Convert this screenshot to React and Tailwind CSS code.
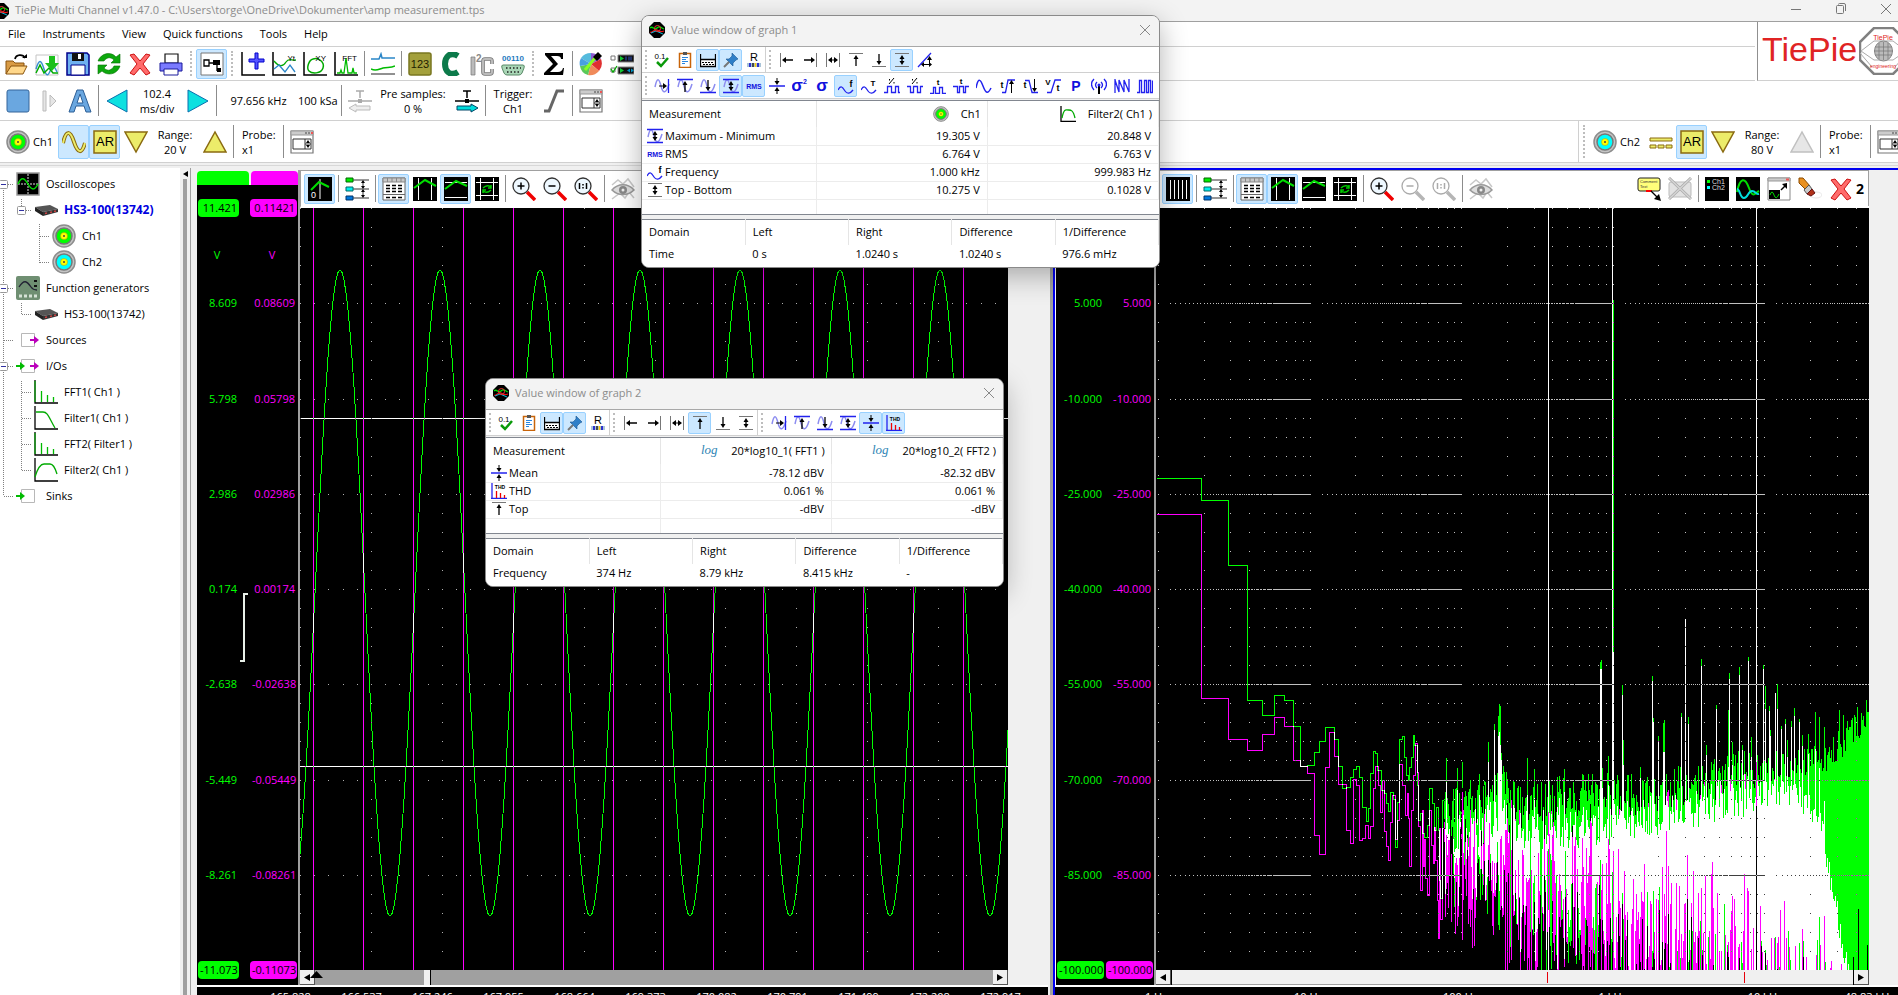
import React from 'react'
import clsx from 'clsx'

/* ---------- signal data ---------- */

function random(seed) {
  let s = seed
  return () => {
    s = (s * 1664525 + 1013904223) % 4294967296
    return s / 4294967296
  }
}

function envelope(points, x) {
  for (let i = 1; i < points.length; i++) {
    const [x0, y0] = points[i - 1]
    const [x1, y1] = points[i]
    if (x <= x1) return y0 + ((y1 - y0) * (x - x0)) / (x1 - x0)
  }
  return points[points.length - 1][1]
}

function dot(x, y) {
  return `M${Math.round(x)} ${Math.round(y)}h1v1h-1z`
}

const MAJOR = 95.25

function timeGrid() {
  let d = ''
  for (let c = 0; c < 10; c++) {
    for (let r = 0; r <= 40; r++) d += dot(c * 70.9, r * (MAJOR / 5))
  }
  for (let r = 1; r < 8; r++) {
    for (let x = 0; x < 708; x += 14.18) d += dot(x, r * MAJOR)
  }
  return d
}

function logGrid() {
  let d = ''
  for (let dec = 0; dec < 5; dec++) {
    for (let n = 1; n < 10; n++) {
      const x = 2 + 151.6 * (dec + Math.log10(n))
      if (x > 712) break
      for (let r = 0; r <= 40; r++) d += dot(x, r * (MAJOR / 5))
    }
    for (let r = 1; r < 8; r++) {
      const seen = new Set()
      for (let n = 12; n <= 100; n++) {
        const x = Math.round(2 + 151.6 * (dec + Math.log10(n / 10)))
        if (x > 712 || seen.has(x) || (n % 10 === 0 && n < 100)) continue
        seen.add(x)
        d += dot(x, r * MAJOR)
      }
    }
  }
  return d
}

function sinePath() {
  const pts = []
  for (let x = 0; x <= 708; x += 2) {
    pts.push(`${x} ${(385 - 323 * Math.cos((2 * Math.PI * (x - 40)) / 100)).toFixed(1)}`)
  }
  return 'M' + pts.join('L')
}

const squareEdges = Array.from({ length: 14 }, (_, k) => 13 + 50 * k)

// [right edge, level] for every FFT bin that is wide enough to show as a step
const stepsA = [
  [45, 270], [72, 292], [91, 357], [106, 492], [118, 507], [128, 487], [137, 492], [144, 518], [151, 558], [158, 557],
  [163, 544], [169, 533], [178, 519], [182, 531], [186, 558], [190, 580], [194, 579], [197, 569], [200, 561], [203, 558], [206, 569],
  [210, 599], [212, 613], [214, 600], [217, 565], [219, 543], [221, 545], [225, 562], [228, 582], [230, 585], [232, 595], [234, 603],
  [237, 584], [239, 591], [241, 639], [243, 594], [246, 531], [248, 528], [250, 549], [252, 567], [253, 572], [255, 559], [257, 549],
  [258, 527], [261, 537], [262, 577], [264, 612], [266, 605], [268, 625], [271, 629], [273, 617], [276, 580], [278, 595],
  [280, 622], [282, 599], [283, 622], [284, 672], [286, 690], [288, 592],
]
const stepsB = [
  [45, 306], [72, 490], [91, 531], [106, 542], [118, 526], [128, 509], [137, 518], [144, 552], [151, 558], [158, 565], [163, 627],
  [169, 646], [173, 559], [178, 524], [182, 548], [190, 576], [194, 622], [197, 635], [200, 571], [203, 577], [206, 632], [209, 630],
  [212, 617], [214, 630], [217, 618], [219, 580], [222, 558], [224, 577], [226, 604], [228, 572], [230, 623], [232, 638], [234, 652],
  [236, 614], [239, 587], [241, 631], [243, 612], [246, 556], [249, 577], [251, 607], [252, 585], [253, 610], [255, 658], [257, 602],
  [259, 567], [261, 535], [262, 564], [264, 618], [266, 682], [267, 602], [268, 658], [269, 631], [271, 670], [273, 687],
  [275, 602], [277, 637], [278, 655], [279, 619], [281, 652], [282, 692], [283, 730], [284, 620], [286, 711], [288, 620],
]

function stepPath(steps) {
  return 'M0.5 ' + (steps[0][1] + 0.5) + steps.map(([x, y]) => `V${y + 0.5}H${x + 0.5}`).join('')
}

const topA = [[284, 608], [300, 605], [330, 596], [345, 585], [365, 605], [400, 594], [450, 590], [490, 590], [540, 580], [580, 570], [620, 560], [650, 557], [670, 552], [685, 538], [700, 522], [713, 508]]
const botA = [[284, 640], [340, 655], [360, 660], [400, 690], [440, 690], [500, 705], [560, 745], [620, 790], [713, 820]]
const topB = [[284, 630], [330, 625], [345, 600], [365, 630], [400, 625], [450, 625], [490, 612], [540, 602], [590, 592], [630, 587], [655, 600], [666, 625], [672, 660], [680, 705], [688, 745], [694, 780], [713, 800]]
const botB = [[284, 670], [330, 680], [350, 710], [420, 725], [480, 775], [540, 800], [713, 830]]

// [column, FFT1 peak, FFT2 peak]
const peaks = [
  [290, 550, 574], [301, 560, 582], [306, 554, 584], [314, 572, 602], [323, 566, 587], [332, 534, 554], [338, 516, 522],
  [342, 508, 528], [343, 496, 524], [344, 498, 537], [345, 545, 552], [347, 558, 600], [358, 574, 600], [371, 550, 587],
  [378, 561, 590], [403, 568, 590], [408, 561, 584], [444, 454, 461], [445, 452, 461], [446, 560, 580], [452, 548, 577],
  [456, 0, 0], [457, 92, 444], [466, 477, 487], [467, 532, 557], [484, 559, 570], [496, 468, 473], [497, 510, 514], [502, 528, 534],
  [507, 515, 544], [508, 512, 544], [525, 505, 509], [529, 411, 411], [532, 509, 516], [545, 451, 458], [550, 537, 547],
  [560, 497, 501], [572, 502, 559], [573, 465, 471], [576, 534, 557], [583, 459, 467], [586, 537, 542], [592, 449, 453],
  [595, 529, 549], [607, 457, 461], [609, 478, 501], [613, 498, 503], [614, 522, 528], [619, 485, 485], [621, 476, 501],
  [625, 518, 521], [629, 511, 516], [631, 532, 549], [635, 513, 519], [638, 500, 508], [643, 511, 514], [646, 527, 538],
  [652, 526, 546], [659, 504, 541], [663, 509, 560], [668, 519, 593], [683, 502, 730], [687, 507, 750], [691, 513, 790],
  [701, 499, 800], [705, 505, 800], [710, 492, 800],
]

function spectrum(top, bottom, peakIndex, seed, start) {
  const rnd = random(seed)
  const peakAt = new Map(peaks.map((p) => [p[0], p[peakIndex]]))
  let d = ''
  for (let x = start; x < 713; x++) {
    const spread = x < 600 ? 44 : 30
    const tail = x < 350 ? 80 : 120
    let t = envelope(top, x) + (rnd() - 0.6) * spread
    const b = Math.min(762, envelope(bottom, x) + (rnd() + rnd() - 1) * tail)
    if (peakAt.has(x)) t = peakAt.get(x)
    if (t >= 762 || b <= t) continue
    d += `M${x} ${Math.round(t)}h1V${Math.round(b)}h-1z`
  }
  return d
}

/* ---------- shared bits ---------- */

function Svg({ size = 24, box = 24, children }) {
  return (
    <svg width={size} height={size} viewBox={`0 0 ${box} ${box}`} fill="none" className="shrink-0" aria-hidden="true">
      {children}
    </svg>
  )
}

function Tool({ label, active, tall, children }) {
  return (
    <button
      type="button"
      aria-label={label}
      className={clsx(
        'flex w-[31px] shrink-0 items-center justify-center rounded-xs border',
        tall ? 'h-[34px]' : 'h-[30px]',
        active ? 'border-[#99d1ff] bg-[#cce8ff]' : 'border-transparent',
      )}
    >
      {children}
    </button>
  )
}

function Sep() {
  return (
    <div className="flex w-[6px] shrink-0 justify-center self-stretch py-1">
      <div className="w-px bg-[#8c8c8c]" />
    </div>
  )
}

function Grip() {
  return (
    <div className="flex w-[10px] shrink-0 justify-center self-stretch py-1">
      <div className="border-l-2 border-dotted border-[#bdbdbd]" />
    </div>
  )
}

function Stack({ className, children }) {
  return <div className={clsx('shrink-0 text-center leading-[15px] whitespace-nowrap', className)}>{children}</div>
}

/* ---------- icons, 24px ---------- */

function AppIcon({ size = 16 }) {
  return (
    <Svg size={size} box={16}>
      <path d="M5 0h6l5 5v6l-5 5H5l-5-5V5z" fill="#000" />
      <path d="M1 6c3-3 4 3 7 0s4 0 7 1" stroke="#0d0" strokeWidth="1.3" />
      <path d="M1 10c3 2 4-4 7-2s4 2 7 1" stroke="#e11" strokeWidth="1.3" />
      <path d="M2 11l5-2 7 3" stroke="#0bd" />
      <circle cx="8.500" cy="6.500" r="3" stroke="#e33" />
    </Svg>
  )
}

function Bnc({ color, size = 24 }) {
  return (
    <Svg size={size}>
      <circle cx="12" cy="12" r="11" fill="#c4c4c4" stroke="#8d8d8d" strokeWidth="1.5" />
      <circle cx="12" cy="12" r="8" fill={color} stroke="#777" strokeWidth="1.5" />
      <circle cx="12" cy="12" r="3.500" fill="#ff0" stroke="#a99a00" strokeWidth=".5" />
      <circle cx="12" cy="12" r="1" fill="#444" />
    </Svg>
  )
}

const OpenIcon = () => (
  <Svg>
    <path d="M2 22V9h7l2 2h9v3" fill="#d99b45" stroke="#8a5510" />
    <path d="M2 22l5-8h16l-4 8z" fill="#ffd78a" stroke="#8a5510" />
    <path d="M11 7c1-5 8-5 10-1" stroke="#000" strokeWidth="1.800" />
    <path d="M18 6h5V2z" fill="#000" />
  </Svg>
)
const ImportIcon = () => (
  <Svg>
    <path d="M1 3h22v20H1z" stroke="#c4c4c4" />
    <path d="M1 17c3-10 5-10 8 0s5 5 7 0 4-2 6 3" stroke="#3a8fd0" strokeWidth="1.500" />
    <path d="M1 21l4-8 4 8 5-5 4 5h5" stroke="#0a0" strokeWidth="1.500" />
    <path d="M14 4h6v7h4l-7 8-7-8h4z" fill="#1cc01c" />
  </Svg>
)
const SaveIcon = () => (
  <Svg>
    <path d="M1 1h20l2 2v20H1z" fill="#6fb1f0" stroke="#00008b" strokeWidth="1.500" />
    <path d="M6 1h12v8H6z" fill="#111" />
    <path d="M12 2h3v5h-3z" fill="#fff" />
    <path d="M5 13h14v10H5z" fill="#fff" stroke="#00008b" />
  </Svg>
)
const RefreshIcon = () => (
  <Svg>
    <path d="M1 9C4 1 14-1 19 5l4-3v9h-9l3-3c-4-4-8-2-10 1z" fill="#0da80d" stroke="#067006" strokeWidth=".6" />
    <path d="M23 14c-3 9-13 10-18 5l-4 3v-9h9l-3 3c4 4 8 2 10-2z" fill="#0da80d" stroke="#067006" strokeWidth=".6" />
  </Svg>
)
const CrossIcon = () => (
  <Svg>
    <path d="M2 3l4-1 6 7 6-7 4 1-7 9 7 9-4 2-6-7-6 7-4-2 7-9z" fill="#ff6b6b" stroke="#c11" />
  </Svg>
)
const PrintIcon = () => (
  <Svg>
    <path d="M6 2h13v9H6z" fill="#fff" stroke="#111" strokeWidth="1.200" />
    <path d="M1 11h22v8H1z" fill="#7a7aff" stroke="#1a1a9c" />
    <path d="M5 17h14v6H5z" fill="#fff" stroke="#1a1a9c" />
  </Svg>
)
const ObjectTreeIcon = () => (
  <Svg>
    <path d="M1 1h22v22H1z" fill="#fff" stroke="#777" />
    <path d="M4 8h5v6H4z" stroke="#000" strokeWidth="1.300" />
    <path d="M9 11h4M17 13v6" stroke="#000" strokeWidth="1.300" />
    <path d="M13 8h7v5h-7zM17 16h4v4h-4z" fill="#000" />
  </Svg>
)
const Axes = ({ children, label }) => (
  <Svg>
    <path d="M1 0v23h23" stroke="#000" strokeWidth="1.500" />
    {children}
    {label && (
      <text x="23" y="9" textAnchor="end" fontSize="8" fill="#000" fontFamily="Liberation Sans">{label}</text>
    )}
  </Svg>
)
const AddGraphIcon = () => (
  <Axes>
    <path d="M14 1h3v6h6v3h-6v7h-3v-7H8V7h6z" fill="#55f" stroke="#00c" />
  </Axes>
)
const YtIcon = () => (
  <Axes label="Yt">
    <path d="M2 9c5 6 9 6 12 1s6-1 10-2" stroke="#0a0" strokeWidth="1.300" />
    <path d="M2 17l5-4 6 7 5-7 5 7" stroke="#2a86c8" strokeWidth="1.300" />
  </Axes>
)
const XyIcon = () => (
  <Axes label="XY">
    <path d="M10 7c5-2 12 3 10 9s-11 6-14 3 0-11 4-12z" stroke="#0a0" strokeWidth="1.500" />
  </Axes>
)
const FftIcon = () => (
  <Axes label="FFT">
    <path d="M3 21h3l1-3 1 3h2l2-15 2 15h4l1-5 1 5h3" stroke="#0b0" strokeWidth="1.300" />
  </Axes>
)
const MeterIcon = () => (
  <Svg>
    <path d="M0 7h8l2-5 1 4h13" stroke="#2a86c8" strokeWidth="1.500" />
    <path d="M0 17c5 3 8 0 12-1s8 0 12-2" stroke="#0b0" strokeWidth="1.500" />
    <path d="M0 22h24" stroke="#222" />
  </Svg>
)
const DigitsIcon = () => (
  <Svg>
    <rect x="1" y="1" width="22" height="22" rx="2" fill="#a3a03c" stroke="#7a7720" strokeWidth="1.500" />
    <text x="12" y="16" textAnchor="middle" fontSize="11" fill="#1d1d00" fontFamily="Liberation Sans">123</text>
  </Svg>
)
const CIcon = () => (
  <Svg>
    <path d="M19 4C11-1 6 5 6 12s5 13 13 8" stroke="#0c7a4a" strokeWidth="6" />
  </Svg>
)
const I2cIcon = () => (
  <Svg>
    <path d="M1 5h4v18H1z" fill="#bbb" stroke="#777" strokeWidth=".7" />
    <text x="6" y="10" fontSize="10" fontWeight="bold" fill="#888" fontFamily="Liberation Sans">2</text>
    <path d="M22 12V9q0-2-2-2h-5q-2 0-2 2v11q0 2 2 2h5q2 0 2-2v-3" stroke="#777" strokeWidth="3.600" />
    <path d="M22 12V9q0-2-2-2h-5q-2 0-2 2v11q0 2 2 2h5q2 0 2-2v-3" stroke="#bbb" strokeWidth="2" />
  </Svg>
)
const SerialIcon = () => (
  <Svg>
    <text x="12" y="9" textAnchor="middle" fontSize="8" fontWeight="bold" fill="#1d7ac0" fontFamily="Liberation Sans">00110</text>
    <path d="M2 13h20q2 0 1 3l-2 5q-1 2-3 2H6q-2 0-3-2l-2-5q-1-3 1-3z" fill="#a9d6b6" stroke="#5a8a68" />
    <path d="M5 16h15M6 20h12" stroke="#222" strokeWidth="1.500" strokeDasharray="1.500 2" />
  </Svg>
)
const SigmaIcon = () => (
  <Svg>
    <path d="M3 1h18v6h-2q0-3-4-3H9l7 8-8 8h8q4 0 5-4h1l-1 7H2v-2l9-9-8-9z" fill="#000" />
  </Svg>
)
const ColorsIcon = () => (
  <Svg>
    <path d="M12 12L2 6a12 12 0 0 1 10-5z" fill="#5bd" />
    <path d="M12 12V1a12 12 0 0 1 10 6z" fill="#8d5ad0" />
    <path d="M12 12l10-5a12 12 0 0 1-2 12z" fill="#e03030" />
    <path d="M12 12l8 7a12 12 0 0 1-11 4z" fill="#f08a5a" />
    <path d="M12 12L9 23a11 11 0 0 1-8-9z" fill="#5ac85a" />
    <path d="M12 12L1 14a11 11 0 0 1 1-8z" fill="#48a0e0" />
    <path d="M6 18L16 6" stroke="#8f2" strokeWidth="3" />
    <path d="M14 5l5-5 4 4-5 5z" fill="#000" />
  </Svg>
)
const OptionsIcon = () => (
  <Svg>
    <path d="M1 4h4v4H1zM1 16h4v4H1z" stroke="#777" />
    <path d="M1 17l2 3 4-6" stroke="#0a0" strokeWidth="1.300" />
    <path d="M8 3h16v7H8zM8 15h16v7H8z" fill="#111" stroke="#888" />
    <path d="M10 4l4 2.500-4 2.500zM10 16l4 2.500-4 2.500z" fill="#1c3" />
    <path d="M16 4.500v4M19 4.500v4M21 4.500v4" stroke="#35c" />
    <path d="M20 16.500l-3 2 3 2zM21 16.500l3 2-3 2z" fill="#09c" />
  </Svg>
)
const StopIcon = () => (
  <Svg>
    <rect x="1" y="1" width="22" height="22" rx="2" fill="#6aa7e0" stroke="#34659a" />
  </Svg>
)
const OneShotIcon = () => (
  <Svg>
    <path d="M6 2h3v20H6z" fill="#e6e6e6" stroke="#bbb" />
    <path d="M13 6l6 6-6 6z" fill="#e6e6e6" stroke="#bbb" />
  </Svg>
)
const AutoIcon = () => (
  <Svg>
    <path d="M9 1h6l8 22h-5l-2-6H8l-2 6H1zM12 5l-3 9h6z" fill="#6aa7e0" fillRule="evenodd" stroke="#2d5f96" />
  </Svg>
)
const TriIcon = ({ dir, fill, stroke }) => (
  <Svg>
    {dir === 'left' && <path d="M22 1v22L2 12z" fill={fill} stroke={stroke} />}
    {dir === 'right' && <path d="M2 1v22l20-11z" fill={fill} stroke={stroke} />}
    {dir === 'down' && <path d="M1 2h22L12 22z" fill={fill} stroke={stroke} strokeWidth="1.500" />}
    {dir === 'up' && <path d="M1 22h22L12 2z" fill={fill} stroke={stroke} strokeWidth="1.500" />}
  </Svg>
)
const PreTriggerIcon = ({ right }) => (
  <Svg>
    <path d="M8 2h8M12 2v7M0 12h24" stroke={right ? '#000' : '#aaa'} strokeWidth="1.500" />
    <path d="M10 10h4v4h-4z" fill={right ? '#000' : '#aaa'} />
    {right ? (
      <path d="M2 17h14v-2l7 4-7 4v-2H2z" fill="#0dd" stroke="#046" />
    ) : (
      <path d="M22 17H8v-2l-7 4 7 4v-2h14z" fill="#eee" stroke="#bbb" />
    )}
  </Svg>
)
const SlopeIcon = () => (
  <Svg>
    <path d="M2 22h5L15 2h7" stroke="#666" strokeWidth="3" />
  </Svg>
)
const SettingsIcon = () => (
  <Svg>
    <path d="M1 1h22v22H1z" fill="#fff" stroke="#777" strokeWidth="1.200" />
    <path d="M1 1h22v4H1z" fill="#ccc" stroke="#999" />
    <path d="M15 3h2M18 3h2" stroke="#888" strokeWidth="2" />
    <path d="M21 3h2" stroke="#e55" strokeWidth="2" />
    <path d="M3 9h18v10H3zM15 9v10M15 14h6" stroke="#333" />
    <path d="M16 13l2-3 2 3zM16 15l2 3 2-3z" fill="#000" />
  </Svg>
)
const SineIcon = () => (
  <Svg>
    <path d="M1 13C4 0 8 0 12 12s8 12 11 1" stroke="#8a6a10" strokeWidth="4" />
    <path d="M1 13C4 0 8 0 12 12s8 12 11 1" stroke="#ecec6a" strokeWidth="2" />
  </Svg>
)
const DcIcon = () => (
  <Svg>
    <path d="M1 8h22v3H1zM1 15h6v3H1zM9 15h6v3H9zM17 15h6v3h-6z" fill="#ecec6a" stroke="#8a6a10" />
  </Svg>
)
const ArIcon = () => (
  <Svg>
    <rect x="1" y="1" width="22" height="22" fill="#ecec6a" stroke="#8a6a10" strokeWidth="1.500" />
    <text x="12" y="16" textAnchor="middle" fontSize="13" fill="#000" fontFamily="Liberation Sans">AR</text>
  </Svg>
)
const Screen = ({ children }) => (
  <Svg>
    <path d="M0 0h24v24H0z" fill="#000" />
    {children}
  </Svg>
)
const ZeroCursorIcon = () => (
  <Screen>
    <path d="M12 2v20" stroke="#fff" />
    <path d="M3 13l8-8 10 5" stroke="#0d0" strokeWidth="2" />
    <text x="3" y="21" fontSize="9" fill="#fff" fontFamily="Liberation Sans">0</text>
  </Screen>
)
const BarsIcon = () => (
  <Screen>
    <path d="M4.500 3v19M8.500 3v19M12.500 3v19M16.500 3v19M20.500 3v19" stroke="#fff" />
  </Screen>
)
const SourcesIcon = () => (
  <Svg>
    <path d="M8 3h16M8 12h16M8 21h16M18 5v5M18 14v5" stroke="#333" />
    <path d="M16 6l2-3 2 3zM16 9l2 3 2-3zM16 15l2-3 2 3zM16 18l2 3 2-3z" fill="#000" />
    <path d="M1 1h7v4H1z" fill="#0e0" stroke="#060" />
    <path d="M1 10h7v4H1z" fill="#0ee" stroke="#066" />
    <path d="M1 19h7v4H1z" fill="#07d" stroke="#036" />
  </Svg>
)
const ValueTableIcon = () => (
  <Svg>
    <path d="M1 1h22v22H1z" fill="#fff" stroke="#666" />
    <path d="M1 1h22v4H1z" fill="#c8c8c8" stroke="#888" />
    <path d="M5.500 1v4M10 1v4M14.500 1v4M19 1v4" stroke="#888" />
    <path d="M4 8.500h16M4 11.500h16M4 14.500h16M4 20.500h16" stroke="#000" strokeWidth="1.300" strokeDasharray="4 2" />
    <path d="M1 17.500h22" stroke="#666" />
  </Svg>
)
const VertCursorIcon = () => (
  <Screen>
    <path d="M5.500 1v22M18.500 1v22" stroke="#fff" />
    <path d="M1 11l11-8 11 6" stroke="#0d0" strokeWidth="2" />
  </Screen>
)
const HorCursorIcon = () => (
  <Screen>
    <path d="M1 5.500h22M1 20.500h22" stroke="#fff" />
    <path d="M1 12l11-8 11 5" stroke="#0d0" strokeWidth="2" />
  </Screen>
)
const FrameIcon = () => (
  <Screen>
    <path d="M5.500 1v22M18.500 1v22M1 5.500h22M1 18.500h22" stroke="#fff" />
    <path d="M8 11q4-4 8-1M16 8v3h-3M16 13q-4 4-8 1M8 16v-3h3" stroke="#0c0" strokeWidth="1.500" />
  </Screen>
)
const ZoomIcon = ({ kind, dim }) => (
  <Svg>
    <path d="M15 15l8 8" stroke={dim ? '#b5b5b5' : '#f00000'} strokeWidth="3.500" />
    <circle cx="9" cy="9" r="8" fill={dim ? '#fff' : '#eef8ff'} stroke={dim ? '#aaa' : '#333'} strokeWidth="1.300" />
    {kind === 'one' ? (
      <path d="M5.500 6v6M12.500 6v6M9 7v1.500M9 10v1.500" stroke={dim ? '#aaa' : '#000'} strokeWidth="1.500" />
    ) : (
      <path d={kind === 'in' ? 'M5.500 9h7M9 5.500v7' : 'M5.500 9h7'} stroke={dim ? '#aaa' : '#000'} strokeWidth="1.500" />
    )}
  </Svg>
)
const EyeIcon = () => (
  <Svg>
    <path d="M1 8l6-5 5 4 5-5 6 8M1 22l8-6 5 5 4-6 5 6" stroke="#c8c8c8" strokeWidth="1.500" />
    <path d="M1 13c6-7 16-7 22 0-6 6-16 6-22 0z" fill="#ddd" stroke="#999" strokeWidth="1.500" />
    <circle cx="12" cy="13" r="4" fill="#888" />
    <circle cx="12" cy="13" r="1.500" fill="#eee" />
  </Svg>
)
const CommentIcon = () => (
  <Svg>
    <rect x="1" y="1" width="22" height="13" rx="2" fill="#ffff7a" stroke="#222" />
    <text x="3" y="6" fontSize="4" fill="#333" fontFamily="Liberation Sans">Comment</text>
    <text x="3" y="11" fontSize="4" fill="#333" fontFamily="Liberation Sans">Text</text>
    <path d="M9 14h6" stroke="#f00" strokeWidth="2" />
    <path d="M14 14l8 8" stroke="#000" strokeWidth="1.300" />
    <path d="M24 24l-7-2 5-5z" fill="#000" />
  </Svg>
)
const CommentOffIcon = () => (
  <Svg>
    <rect x="1" y="5" width="22" height="15" rx="2" fill="#e2e2e2" stroke="#bbb" />
    <path d="M1 1l22 21M23 1L1 22" stroke="#aaa" strokeWidth="3" />
    <path d="M1 1l22 21M23 1L1 22" stroke="#d5d5d5" strokeWidth="1.500" />
  </Svg>
)
const LegendIcon = () => (
  <Screen>
    <path d="M2 3h3v3H2z" fill="#0f0" />
    <path d="M2 9h3v3H2z" fill="#0ff" />
    <text x="7" y="7" fontSize="7" fill="#ddd" fontFamily="Liberation Sans">Ch1</text>
    <text x="7" y="13" fontSize="7" fill="#ddd" fontFamily="Liberation Sans">Ch2</text>
  </Screen>
)
const TwoWavesIcon = () => (
  <Screen>
    <path d="M1 15C4 0 9 0 13 11s6 5 10 3" stroke="#0d0" strokeWidth="2" />
    <path d="M1 12c3 0 3 9 7 9s4-7 8-7 4 4 7 3" stroke="#0dd" strokeWidth="2" />
  </Screen>
)
const PopOutIcon = () => (
  <Svg>
    <path d="M1 1h22v22H1z" fill="#fff" stroke="#888" />
    <path d="M1 1h22v3H1z" fill="#ccc" stroke="#999" />
    <path d="M19 2.500h3" stroke="#e55" strokeWidth="2" />
    <path d="M2 13h11v9H2z" fill="#000" />
    <path d="M3 18q2-6 4 0t5-1" stroke="#0d0" />
    <path d="M14 13l4-4" stroke="#000" strokeWidth="1.500" />
    <path d="M20 6v6l-5-5z" fill="#000" />
  </Svg>
)
const EraserIcon = () => (
  <Svg>
    <ellipse cx="18" cy="18" rx="6" ry="3" fill="#fff" stroke="#e8e8e8" />
    <path d="M1 1h4l7 8-4 4-7-7z" fill="#e89020" stroke="#8a4a00" />
    <path d="M11 8l3 4-5 5-3-4z" fill="#c8c8c8" stroke="#555" />
    <path d="M14 12l3 4-4 3-4-2z" fill="#b03018" stroke="#611" />
  </Svg>
)

/* ---------- icons, 16px (value windows) ---------- */

const S = ({ children }) => <Svg size={16} box={16}>{children}</Svg>
const up = (x, y) => `M${x - 2.5} ${y + 4}h5l-2.500-4z`
const down = (x, y) => `M${x - 2.5} ${y - 4}h5l-2.500 4z`
const Glyph = ({ x = 8, y, size = 9, children, fill = '#000', weight = 'bold' }) => (
  <text x={x} y={y} textAnchor="middle" fontSize={size} fontWeight={weight} fill={fill} fontFamily="Liberation Sans">{children}</text>
)
const faintWave = <path d="M1 9C3-1 5 0 7 8s5 8 8-2" stroke="#8c8cf0" strokeWidth="1.500" />

const small = {
  decimals: <S><Glyph x={6} y={7} size={8} weight="normal">0.1</Glyph><path d="M3 10l4 4 7-8" stroke="#0a9a0a" strokeWidth="2.500" /></S>,
  clipboard: <S><path d="M2.500 1.500h11v14h-11z" fill="#fff" stroke="#c8640a" strokeWidth="1.500" /><path d="M6 0h4v3H6z" fill="#555" /><path d="M5 5.500h6M5 7.500h4M5 9.500h6M5 11.500h3" stroke="#2a86e0" /></S>,
  display: <S><path d="M1 8h14v6H1z" fill="#fff" /><path d="M.5 2v12.500h15V2M.5 7.500h15" stroke="#000" strokeWidth="1.300" /><path d="M2 10.500h12M3 12.500h11" stroke="#000" strokeDasharray="2 1" /></S>,
  pin: <S><path d="M9 1l6 6-2 1-3 3v3L3 7h3l3-3z" fill="#2f7fc8" stroke="#1a5590" strokeWidth=".6" /><path d="M6 10l-5 5" stroke="#777" strokeWidth="2" /></S>,
  resistor: <S><Glyph y={9} size={11} weight="normal">R</Glyph><path d="M1 13h14" stroke="#aac4d8" strokeWidth="4" /><path d="M4 11v4M12 11v4" stroke="#00c" strokeWidth="1.500" /><path d="M7 11v4" stroke="#222" strokeWidth="1.500" /><path d="M9.500 11v4" stroke="#fc0" strokeWidth="1.500" /></S>,
  left: <S><path d="M1.500 1v14" stroke="#777" /><path d="M5 8h9" stroke="#000" strokeWidth="1.300" /><path d="M3 8l4-3v6z" fill="#000" /></S>,
  right: <S><path d="M14.500 1v14" stroke="#777" /><path d="M2 8h9" stroke="#000" strokeWidth="1.300" /><path d="M13 8L9 5v6z" fill="#000" /></S>,
  width: <S><path d="M1.500 1v14M14.500 1v14" stroke="#777" /><path d="M4 8h8" stroke="#000" /><path d="M3 8l4-3v6zM13 8L9 5v6z" fill="#000" /></S>,
  top: <S><path d="M1 1.500h14" stroke="#777" /><path d="M8 6v8" stroke="#000" strokeWidth="1.300" /><path d={up(8, 3)} fill="#000" /></S>,
  bottom: <S><path d="M1 14.500h14" stroke="#777" /><path d="M8 2v8" stroke="#000" strokeWidth="1.300" /><path d={down(8, 13)} fill="#000" /></S>,
  topBottom: <S><path d="M1 1.500h14M1 14.500h14" stroke="#777" /><path d="M8 5v6" stroke="#000" strokeWidth="1.300" /><path d={up(8, 3) + down(8, 13)} fill="#000" /></S>,
  slope: <S><path d="M1 15L14 1" stroke="#22e" strokeWidth="1.300" /><path d="M6 12.500h6M12.500 12V6" stroke="#000" /><path d="M4 12.500l3-2.500v5zM15 12.500L12 10v5zM10 8h5l-2.500-4z" fill="#000" /></S>,
  mean: <S><path d="M0 8h16" stroke="#22e" strokeWidth="1.500" /><path d="M8 0v4M8 12v4" stroke="#000" /><path d={down(8, 7) + up(8, 9)} fill="#000" /></S>,
  atX: <S>{faintWave}<path d="M14.500 1v14" stroke="#22e" strokeWidth="1.300" /><path d="M5 8h6" stroke="#000" /><path d="M13 8L9 5v6z" fill="#000" /></S>,
  max: <S>{faintWave}<path d="M0 1.500h16" stroke="#22e" strokeWidth="1.300" /><path d="M8 6v8" stroke="#000" strokeWidth="1.300" /><path d={up(8, 3)} fill="#000" /></S>,
  min: <S>{faintWave}<path d="M0 14.500h16" stroke="#22e" strokeWidth="1.300" /><path d="M8 2v8" stroke="#000" strokeWidth="1.300" /><path d={down(8, 13)} fill="#000" /></S>,
  maxMin: <S>{faintWave}<path d="M0 1.500h16M0 14.500h16" stroke="#22e" strokeWidth="1.300" /><path d="M8 5v6" stroke="#000" strokeWidth="1.300" /><path d={up(8, 3) + down(8, 13)} fill="#000" /></S>,
  rms: <S><Glyph y={11} size={7} fill="#11d">RMS</Glyph></S>,
  variance: <S><Glyph x={5} y={13} size={17} fill="#11d">σ</Glyph><Glyph x={13} y={6} size={7} fill="#11d">2</Glyph></S>,
  stdDev: <S><Glyph x={7} y={13} size={17} fill="#11d">σ</Glyph></S>,
  frequency: <S><path d="M0 12c3-6 5-2 7 1s5 3 8-1" stroke="#22e" strokeWidth="1.300" /><Glyph x={13} y={9} size={9}>f</Glyph></S>,
  period: <S><path d="M0 12c3-6 5-2 7 1s5 3 8-1" stroke="#22e" strokeWidth="1.300" /><Glyph x={12} y={8} size={8}>T</Glyph></S>,
  dutyPos: <S><path d="M0 14.500h3.500v-6h4v6h4v-6h3v6H16" stroke="#22e" strokeWidth="1.300" /><path d="M5 6l5-6M5.500 1v1.500M10 4v1.500" stroke="#000" /></S>,
  dutyNeg: <S><path d="M0 8.500h3.500v6h3v-6h4v6h3v-6H16" stroke="#22e" strokeWidth="1.300" /><path d="M5 6l5-6M5.500 1v1.500M10 4v1.500" stroke="#000" /></S>,
  widthPos: <S><path d="M0 15.500h3.500v-6h2v6h4v-6h3v6H16" stroke="#22e" strokeWidth="1.300" /><Glyph y={7} size={8}>t</Glyph></S>,
  widthNeg: <S><path d="M0 8.500h4.500v6h2v-6h4v6h2v-6H16" stroke="#22e" strokeWidth="1.300" /><Glyph y={6} size={8}>t</Glyph></S>,
  count: <S><path d="M0 10C2 0 4 0 7 8s5 8 8 2" stroke="#22e" strokeWidth="1.500" /></S>,
  rise: <S><path d="M3 14.500h3.500L9 2h7" stroke="#22e" strokeWidth="1.300" /><path d="M12.500 5v10" stroke="#000" /><path d={up(12.5, 2)} fill="#000" /><Glyph x={3} y={10}>t</Glyph></S>,
  fall: <S><path d="M3 2.500h4L10 14.500h6" stroke="#22e" strokeWidth="1.300" /><path d="M12.500 1v10" stroke="#000" /><path d={down(12.5, 14)} fill="#000" /><Glyph x={3} y={10}>t</Glyph></S>,
  slew: <S><path d="M2 14.500h4L10 2h6" stroke="#22e" strokeWidth="1.300" /><Glyph x={3} y={7} size={8}>V</Glyph><Glyph x={13} y={13}>t</Glyph></S>,
  power: <S><Glyph y={13} size={14} fill="#11d">P</Glyph></S>,
  phase: <S><path d="M3 1q-5 5 0 11M6 4q-3 3 0 6M13 1q5 5 0 11M10 4q3 3 0 6" stroke="#22e" strokeWidth="1.300" /><path d="M8 7v9" stroke="#000" strokeWidth="2" /><circle cx="8" cy="7" r="1.500" fill="#22e" /></S>,
  burst: <S><path d="M1 1v14M1 2l4 12V2l5 12V2l5 12V1" stroke="#22e" strokeWidth="1.300" /></S>,
  pulses: <S><path d="M0 14.500h2.500v-12h2v12h3v-12h2v12h2v-12h2v12h2v-12" stroke="#22e" strokeWidth="1.300" /></S>,
  thd: <S><path d="M1 0v16M0 15.500h16" stroke="#22e" strokeWidth="1.300" /><path d="M5.500 8v7M9.500 10v5M13.500 12v3" stroke="#e00" strokeWidth="1.300" /><Glyph x={9} y={6} size={5}>THD</Glyph></S>,
  log: <svg width="18" height="16" viewBox="0 0 18 16"><text x="0" y="11" fontSize="13" fontStyle="italic" fill="#2f86b5" fontFamily="Liberation Serif">log</text></svg>,
  ch1: <Bnc color="#0f0" size={16} />,
  band: <S><path d="M1 0v15.500h15" stroke="#000" strokeWidth="1.300" /><path d="M2 12C4 2 6 4 8 4s5-1 7 8" stroke="#0a0" strokeWidth="1.300" /></S>,
}

/* ---------- header ---------- */

const menus = ['File', 'Instruments', 'View', 'Quick functions', 'Tools', 'Help']

function TitleBar() {
  return (
    <header className="flex h-[22px] shrink-0 items-center border-b border-[#a0a0a0] bg-[#f3f3f3] text-[#8c8c8c]">
      <div className="flex w-[15px] justify-end overflow-hidden pr-[6px]">
        <AppIcon />
      </div>
      <h1 className="flex-1 pb-[2px]">TiePie Multi Channel v1.47.0 - C:\Users\torge\OneDrive\Dokumenter\amp measurement.tps</h1>
      <div className="flex gap-[35px] pr-[7px] pb-[4px]">
        <button type="button" aria-label="Minimize"><svg width="10" height="10" className="block"><path d="M0 5.500h10" stroke="#777" /></svg></button>
        <button type="button" aria-label="Restore">
          <svg width="10" height="11" fill="none" className="block"><rect x=".5" y="2.500" width="7" height="8" rx="1" stroke="#777" /><path d="M2.500 1.500q0-1 1-1H8q1.500 0 1.500 1.500v6" stroke="#777" /></svg>
        </button>
        <button type="button" aria-label="Close"><svg width="10" height="10" className="block"><path d="M0 0l10 10M10 0L0 10" stroke="#777" /></svg></button>
      </div>
    </header>
  )
}

function Logo() {
  return (
    <div className="flex h-[59px] w-[141px] shrink-0 items-center overflow-hidden border-b border-l border-b-[#d0d0d0] border-l-[#909090] pl-[4px]">
      <span className="w-[97px] shrink-0 pb-[4px] font-['Liberation_Sans',sans-serif] text-[34px] leading-[40px] text-[#e02424]">TiePie</span>
      <svg width="49" height="48" viewBox="0 0 49 48" fill="none" className="shrink-0">
        <path d="M15 1h19l14 14v18L34 47H15L1 33V15z" fill="#fff" stroke="#808080" strokeWidth="2.500" />
        <path d="M2 24L15 14h19l13 10-13 9H15zM1 26l12 14M48 26L36 40" stroke="#aaa" />
        <ellipse cx="24.500" cy="24" rx="9" ry="10" fill="#bbb" stroke="#888" />
        <path d="M20 16v16M24.500 15v18M29 16v16M16 20h17M15 24h19M16 28h17" stroke="#777" strokeWidth=".7" />
        <text x="24" y="13" textAnchor="middle" fontSize="7" fill="#e02424" fontFamily="Liberation Sans">TiePie</text>
        <text x="24" y="41" textAnchor="middle" fontSize="5" fill="#e02424" fontFamily="Liberation Sans">engineering</text>
      </svg>
    </div>
  )
}

function MainToolbar() {
  return (
    <div className="flex h-[34px] items-center border-b border-[#d0d0d0]">
      <Tool label="Open"><OpenIcon /></Tool>
      <Tool label="Import"><ImportIcon /></Tool>
      <Tool label="Save"><SaveIcon /></Tool>
      <Tool label="Refresh"><RefreshIcon /></Tool>
      <Tool label="Delete"><CrossIcon /></Tool>
      <Tool label="Print"><PrintIcon /></Tool>
      <Grip />
      <Tool label="Object tree" active><ObjectTreeIcon /></Tool>
      <Grip />
      <Tool label="New graph"><AddGraphIcon /></Tool>
      <Tool label="Yt graph"><YtIcon /></Tool>
      <Tool label="XY graph"><XyIcon /></Tool>
      <Tool label="FFT graph"><FftIcon /></Tool>
      <Sep />
      <Tool label="Meter"><MeterIcon /></Tool>
      <Sep />
      <Tool label="Value display"><DigitsIcon /></Tool>
      <Tool label="CAN"><CIcon /></Tool>
      <Tool label="I2C"><I2cIcon /></Tool>
      <Tool label="Serial"><SerialIcon /></Tool>
      <Grip />
      <Tool label="Math"><SigmaIcon /></Tool>
      <Sep />
      <Tool label="Colors"><ColorsIcon /></Tool>
      <Tool label="Toolbars"><OptionsIcon /></Tool>
    </div>
  )
}

function InstrumentToolbar() {
  return (
    <div className="flex h-[40px] shrink-0 items-center border-b border-[#d0d0d0] pl-[2px]">
      <Tool label="Stop"><StopIcon /></Tool>
      <Tool label="One shot"><OneShotIcon /></Tool>
      <Tool label="Auto setup"><AutoIcon /></Tool>
      <Sep />
      <Tool label="Faster time base"><TriIcon dir="left" fill="#0de0e0" stroke="#0a6fae" /></Tool>
      <Stack className="w-[50px]">102.4<br />ms/div</Stack>
      <Tool label="Slower time base"><TriIcon dir="right" fill="#0de0e0" stroke="#0a6fae" /></Tool>
      <Sep />
      <Stack className="w-[79px]">97.656 kHz</Stack>
      <Stack className="w-[36px]">100 kSa</Stack>
      <div className="w-[4px]" />
      <Sep />
      <Tool label="Less pre samples"><PreTriggerIcon /></Tool>
      <Stack className="w-[76px]">Pre samples:<br />0 %</Stack>
      <Tool label="More pre samples"><PreTriggerIcon right /></Tool>
      <Sep />
      <Stack className="w-[50px]">Trigger:<br />Ch1</Stack>
      <Tool label="Rising slope"><SlopeIcon /></Tool>
      <Sep />
      <Tool label="Instrument settings"><SettingsIcon /></Tool>
    </div>
  )
}

function ChannelBar({ name, color, coupling, range, canRaise }) {
  return (
    <>
      <Tool label={name} tall><Bnc color={color} /></Tool>
      <span className="w-[25px] shrink-0">{name}</span>
      <Tool label="Coupling" tall active={coupling === 'AC'}>{coupling === 'AC' ? <SineIcon /> : <DcIcon />}</Tool>
      <Tool label="Auto ranging" tall active><ArIcon /></Tool>
      <Tool label="Lower range" tall><TriIcon dir="down" fill="#ecec6a" stroke="#8a6a10" /></Tool>
      <Stack className="w-[48px]">Range:<br />{range}</Stack>
      <Tool label="Higher range" tall>
        <TriIcon dir="up" fill={canRaise ? '#ecec6a' : '#e6e6e6'} stroke={canRaise ? '#8a6a10' : '#c0c0c0'} />
      </Tool>
      <Sep />
      <div className="w-[44px] shrink-0 pl-[6px] leading-[15px]">Probe:<br />x1</div>
      <Sep />
      <Tool label={`${name} settings`} tall><SettingsIcon /></Tool>
    </>
  )
}

/* ---------- object tree ---------- */

const FftSource = () => (
  <Svg><path d="M1 0v23h23" stroke="#000" strokeWidth="1.300" /><path d="M1 1v21" stroke="#0b0" /><path d="M7.500 11v11M13.500 15v7M19.500 17v5" stroke="#0b0" strokeWidth="1.300" /></Svg>
)
const LowPass = () => (
  <Svg><path d="M1 0v23h23" stroke="#000" strokeWidth="1.300" /><path d="M2 6h7c5 0 6 6 12 16" stroke="#0a0" strokeWidth="1.300" /></Svg>
)
const BandPass = () => (
  <Svg><path d="M1 0v23h23" stroke="#000" strokeWidth="1.300" /><path d="M1 19C4 9 7 6 10 6h6q4 0 7 10" stroke="#0a0" strokeWidth="1.300" /></Svg>
)
const Device = () => (
  <Svg><path d="M1 9l15-2 8 4-15 3z" fill="#555" /><path d="M1 9l8 5v4l-8-5z" fill="#222" /><path d="M9 14l15-3v3L9 18z" fill="#333" /><path d="M11 15.500l2-.5M16 14.500l2-.5M20 13.500l2-.5" stroke="#c44" strokeWidth="1.500" /></Svg>
)
const ScopeIcon = () => (
  <Svg><path d="M1 1h22v22H1z" fill="#000" stroke="#999" strokeWidth="1.500" /><path d="M12 2v20M2 12h20" stroke="#ddd" strokeDasharray="2 1" /><path d="M2 12C5 5 8 5 12 12s7 6 10 0" stroke="#0d0" strokeWidth="1.500" /></Svg>
)
const GeneratorIcon = () => (
  <Svg><rect width="24" height="24" rx="2" fill="#6f8f72" /><path d="M3 11c5-8 8-6 12 0 2 3 4 3 6 3" stroke="#223" strokeWidth="1.300" /><path d="M18 5h3M18 10h3" stroke="#111" strokeWidth="2" /><path d="M3 20h18" stroke="#d5e2d5" strokeWidth="3" strokeDasharray="3 2" /></Svg>
)
const IoIcon = ({ input, output }) => (
  <Svg>
    <path d="M5.500 5.500h13v13h-13z" fill="#fff" stroke="#b8b8b8" />
    {input && <path d="M0 11h4V8l5 4-5 4v-3H0z" fill="#0b0" />}
    {output && <path d="M14 11h4V8l5 4-5 4v-3h-4z" fill="#b0b" />}
  </Svg>
)

const treeRows = [
  { text: 'Oscilloscopes', level: 0, icon: <ScopeIcon /> },
  { text: 'HS3-100(13742)', level: 1, icon: <Device />, current: true },
  { text: 'Ch1', level: 2, icon: <Bnc color="#0f0" /> },
  { text: 'Ch2', level: 2, icon: <Bnc color="#0ff" /> },
  { text: 'Function generators', level: 0, icon: <GeneratorIcon /> },
  { text: 'HS3-100(13742)', level: 1, icon: <Device /> },
  { text: 'Sources', level: 0, icon: <IoIcon output /> },
  { text: 'I/Os', level: 0, icon: <IoIcon input output /> },
  { text: 'FFT1( Ch1 )', level: 1, icon: <FftSource /> },
  { text: 'Filter1( Ch1 )', level: 1, icon: <LowPass /> },
  { text: 'FFT2( Filter1 )', level: 1, icon: <FftSource /> },
  { text: 'Filter2( Ch1 )', level: 1, icon: <BandPass /> },
  { text: 'Sinks', level: 0, icon: <IoIcon input /> },
]
const indents = ['pl-[16px]', 'pl-[34px]', 'pl-[52px]']

function ObjectTree() {
  return (
    <nav className="relative w-[180px] shrink-0 bg-white pt-[3px]" aria-label="Objects">
      <svg width="60" height="340" className="absolute top-[3px] left-0" fill="none">
        <path
          d="M3.500 13v312M4 13.500h9M4 117.500h9M4 169.500h9M4 195.500h9M4 325.500h9M21.500 28v12M22 39.500h9M39.500 53v39M40 65.500h9M40 91.500h9M21.500 132v12M22 143.500h9M21.500 210v90M22 221.500h9M22 247.500h9M22 273.500h9M22 299.500h9"
          stroke="#808080"
          strokeDasharray="1 1"
        />
        {[[3, 13], [21, 39], [3, 117], [3, 195]].map(([x, y]) => (
          <g key={`${x}-${y}`}>
            <rect x={x - 3.5} y={y - 3.5} width="8" height="8" rx="1" fill="#fff" stroke="#999" />
            <path d={`M${x - 2} ${y + 0.5}h5`} stroke="#3030a0" />
          </g>
        ))}
      </svg>
      <ul>
        {treeRows.map((row, i) => (
          <li key={i} className={clsx('relative flex h-[26px] items-center gap-[6px]', indents[row.level])}>
            {row.icon}
            <span className={clsx('whitespace-nowrap', row.current && 'text-xs font-bold text-[#0000e0]')}>{row.text}</span>
          </li>
        ))}
      </ul>
    </nav>
  )
}

/* ---------- graphs ---------- */

function GraphTools({ bars, dim, activeVert, activeHor, children }) {
  return (
    <div
      className={clsx(
        'flex h-[38px] shrink-0 items-center border-t border-b-2 border-l border-[#a0a0a0] border-b-white bg-white',
        children ? 'pl-[5px]' : 'pl-[3px]',
      )}
    >
      <Tool label="Cursor mode" active>{bars ? <BarsIcon /> : <ZeroCursorIcon />}</Tool>
      <Sep />
      <Tool label="Source order"><SourcesIcon /></Tool>
      <Sep />
      <Tool label="Value window" active><ValueTableIcon /></Tool>
      <Tool label="Vertical cursors" active={activeVert}><VertCursorIcon /></Tool>
      <Tool label="Horizontal cursors" active={activeHor}><HorCursorIcon /></Tool>
      <Tool label="Reset cursors"><FrameIcon /></Tool>
      <Sep />
      <Tool label="Zoom in"><ZoomIcon kind="in" /></Tool>
      <Tool label="Zoom out"><ZoomIcon kind="out" dim={dim} /></Tool>
      <Tool label="Zoom 1:1"><ZoomIcon kind="one" dim={dim} /></Tool>
      <Sep />
      <Tool label="Show curves"><EyeIcon /></Tool>
      {children}
    </div>
  )
}

function AxisColumn({ labels, unit, color, className }) {
  const green = color === 'green'
  return (
    <div className={clsx('relative flex flex-col justify-between text-right', green ? 'text-[#00ff00]' : 'text-[#ff00ff]', className)}>
      {labels.map((label, i) => {
        const pill = i === 0 || i === labels.length - 1
        return (
          <span
            key={label}
            className={clsx(
              'h-[18px] rounded-[4px] px-[2px] leading-[18px]',
              pill && 'text-black',
              pill && (green ? 'bg-[#00ff00]' : 'bg-[#ff00ff]'),
            )}
          >
            {label}
          </span>
        )
      })}
      {unit && <span className="absolute inset-x-0 top-[48px] pr-[3px] text-center">{unit}</span>}
    </div>
  )
}

function ScrollButton({ right }) {
  return (
    <button
      type="button"
      aria-label={right ? 'Scroll right' : 'Scroll left'}
      className="flex w-[15px] shrink-0 items-center justify-center border-r border-b border-[#555] bg-[#f0f0f0]"
    >
      <svg width="6" height="7"><path d={right ? 'M0 0v7l6-3.500z' : 'M6 0v7L0 3.500z'} fill="#000" /></svg>
    </button>
  )
}

function TimeGraph() {
  return (
    <section className="flex min-w-0 grow-[853] basis-0 flex-col bg-[#f0f0f0] pt-[2px]">
      <div className="flex min-h-0 flex-1">
        <div className="flex w-[103px] shrink-0 flex-col border-r-2 border-[#a0a0a0] pt-px">
          <div className="flex h-[14px] gap-[2px]">
            <div className="w-[52px] rounded-t-sm bg-[#00ff00]" />
            <div className="flex-1 rounded-t-sm bg-[#ff00ff]" />
          </div>
          <div className="relative flex flex-1 bg-black pt-[14px] pb-[6px] pl-px">
            <AxisColumn className="w-[41px]" color="green" unit="V" labels={['11.421', '8.609', '5.798', '2.986', '0.174', '-2.638', '-5.449', '-8.261', '-11.073']} />
            <AxisColumn className="ml-[11px] w-[47px]" color="magenta" unit="V" labels={['0.11421', '0.08609', '0.05798', '0.02986', '0.00174', '-0.02638', '-0.05449', '-0.08261', '-0.11073']} />
            <svg width="10" height="72" fill="none" className="absolute top-[407px] left-[42px]">
              <path d="M9 2H5v67H1" stroke="#e8f0e8" strokeWidth="2" />
            </svg>
          </div>
        </div>
        <div className="flex min-w-0 flex-1 flex-col">
          <GraphTools activeHor />
          <svg viewBox="0 0 708 762" preserveAspectRatio="none" className="isolate min-h-0 w-full flex-1 bg-black" fill="none" shapeRendering="crispEdges">
            <rect width="708" height="762" fill="#000" />
            <path d={timeGrid()} fill="#b0b0b0" />
            <path d={squareEdges.map((x) => `M${x} 0h1v762h-1z`).join('')} fill="#ff00ff" />
            <path d={sinePath()} stroke="#00ff00" className="mix-blend-difference" />
            <path d="M0 210h708v1H0zM0 558h708v1H0z" fill="#fff" className="mix-blend-difference" />
          </svg>
          <div className="relative flex h-[15px] shrink-0 bg-[#a0a0a0]">
            <ScrollButton />
            <div className="ml-[109px] w-[7px] border-r border-black bg-[#f0f0f0]" />
            <div className="flex-1" />
            <ScrollButton right />
            <svg width="13" height="7" className="absolute top-px left-[10px]"><path d="M0 7h13L6.500 0z" fill="#000" /></svg>
          </div>
        </div>
        <div className="w-[42px] shrink-0" />
      </div>
      <div className="mr-[2px] flex h-[10px] shrink-0 overflow-hidden border-t-2 border-white bg-black pt-[2px] pr-[12px] pl-[58px] text-white">
        {['165.828', '166.537', '167.246', '167.955', '168.664', '169.373', '170.082', '170.791', '171.499', '172.208', '172.917'].map((t) => (
          <span key={t} className="flex-1 text-center">{t}</span>
        ))}
      </div>
    </section>
  )
}

function FrequencyGraph() {
  const levels = ['20.000', '5.000', '-10.000', '-25.000', '-40.000', '-55.000', '-70.000', '-85.000', '-100.000']
  return (
    <section className="flex min-w-0 grow-[845] basis-0 border-l-3 border-[#a0a0a0] bg-[#f0f0f0]">
      <div className="flex min-w-0 flex-1 flex-col border-t-2 border-l-2 border-[#0000f0]">
        <div className="flex min-h-0 flex-1">
          <div className="flex w-[101px] shrink-0 flex-col border-r-2 border-l border-[#a0a0a0] border-l-white pt-px">
            <div className="flex h-[14px] gap-[2px]">
              <div className="flex-1 rounded-t-sm bg-[#00ff00]" />
              <div className="flex-1 rounded-t-sm bg-[#ff00ff]" />
            </div>
            <div className="flex flex-1 gap-[2px] bg-black pt-[14px] pb-[6px] pl-px">
              <AxisColumn className="w-[47px]" color="green" labels={levels} />
              <AxisColumn className="w-[47px]" color="magenta" labels={levels} />
            </div>
          </div>
          <div className="flex min-w-0 flex-1 flex-col">
            <GraphTools bars dim activeVert>
              <div className="ml-auto flex items-center self-stretch border-r border-[#a0a0a0]">
                <Tool label="Add comment"><CommentIcon /></Tool>
                <Tool label="Remove comment"><CommentOffIcon /></Tool>
                <Sep />
                <Tool label="Legend"><LegendIcon /></Tool>
                <Tool label="Interpolation"><TwoWavesIcon /></Tool>
                <Tool label="Undock"><PopOutIcon /></Tool>
                <Tool label="Clear"><EraserIcon /></Tool>
                <Tool label="Close graph"><CrossIcon /></Tool>
                <span className="w-[12px] text-sm font-bold">2</span>
              </div>
            </GraphTools>
            <svg viewBox="0 0 713 762" preserveAspectRatio="none" className="isolate min-h-0 w-full flex-1 bg-black" fill="none" shapeRendering="crispEdges">
              <rect width="713" height="762" fill="#000" />
              <path d={stepPath(stepsA)} stroke="#00ff00" className="mix-blend-difference" />
              <path d={stepPath(stepsB)} stroke="#ff00ff" className="mix-blend-difference" />
              <path d={spectrum(topA, botA, 1, 11, 288)} fill="#00ff00" className="mix-blend-difference" />
              <path d={spectrum(topB, botB, 2, 47, 288)} fill="#ff00ff" className="mix-blend-difference" />
              <path d={logGrid()} fill="#c0c0c0" className="mix-blend-difference" />
              <path d="M392 0h1v762h-1zM600 0h1v762h-1z" fill="#fff" className="mix-blend-difference" />
            </svg>
            <div className="flex h-[15px] shrink-0 bg-black">
              <ScrollButton />
              <div className="relative mx-px flex-1 border-b border-[#a0a0a0] bg-[#f0f0f0]">
                <i className="absolute top-[2px] left-[55%] h-[11px] w-px bg-red-600" />
                <i className="absolute top-[2px] left-[84%] h-[11px] w-px bg-red-600" />
              </div>
              <ScrollButton right />
            </div>
          </div>
          <div className="w-[29px] shrink-0" />
        </div>
        <div className="flex h-[10px] shrink-0 overflow-hidden border-t-2 border-white bg-black pt-[2px] pl-[25px] text-center text-white">
          {['1 Hz', '10 Hz', '100 Hz', '1 kHz', '10 kHz'].map((t) => (
            <span key={t} className="flex-1">{t}</span>
          ))}
          <span className="w-[57px] shrink-0">48.83 kHz</span>
        </div>
      </div>
    </section>
  )
}

/* ---------- value windows ---------- */

function SmallTool({ icon, active }) {
  return (
    <button
      type="button"
      aria-label={icon}
      className={clsx(
        'flex h-[22px] w-[23px] shrink-0 items-center justify-center rounded-xs border',
        active ? 'border-[#99d1ff] bg-[#cce8ff]' : 'border-transparent',
      )}
    >
      {small[icon]}
    </button>
  )
}

function SmallBar({ groups, active }) {
  return (
    <div className="flex h-[26px] items-center border-b border-[#d0d0d0] bg-white">
      {groups.map((group, i) => (
        <React.Fragment key={i}>
          <div className={clsx('flex shrink-0 self-stretch py-[3px]', i === 0 ? 'w-[8px] pl-[3px]' : 'w-[10px] border-l border-[#d0d0d0] pl-[3px]')}>
            <div className="border-l-2 border-dotted border-[#bdbdbd]" />
          </div>
          {group.map((icon) => (
            <SmallTool key={icon} icon={icon} active={active.includes(icon)} />
          ))}
        </React.Fragment>
      ))}
    </div>
  )
}

function ValueWindow({ title, bars, columns, rows, domain, className }) {
  return (
    <section className={clsx('absolute w-[519px] overflow-hidden rounded-lg border border-[#8a8a8a] bg-[#f0f0f0] shadow-[0_8px_28px_rgba(0,0,0,0.3)]', className)}>
      <header className="flex h-[31px] items-center gap-[6px] border-b border-[#a8a8a8] bg-[#f3f3f3] pr-[9px] pb-[2px] pl-[7px] text-[#8c8c8c]">
        <AppIcon />
        <h2 className="flex-1">{title}</h2>
        <button type="button" aria-label="Close">
          <svg width="10" height="10" className="block"><path d="M0 0l10 10M10 0L0 10" stroke="#888" /></svg>
        </button>
      </header>
      {bars.map((bar, i) => (
        <SmallBar key={i} groups={bar.groups} active={bar.active} />
      ))}
      <div className="mt-px border-y border-[#828790] bg-white">
        <table className="w-full table-fixed border-collapse">
          <thead>
            <tr className="h-[26px]">
              <th className="w-[174px] border-r border-[#e5e5e5] pl-[7px] text-left font-normal">Measurement</th>
              {columns.map((col) => (
                <th key={col.name} className="border-r border-[#e5e5e5] pr-[6px] font-normal">
                  <div className="flex items-center justify-end gap-[12px]">{small[col.icon]}{col.name}</div>
                </th>
              ))}
            </tr>
          </thead>
          <tbody>
            {rows.map((row) => (
              <tr key={row.name} className="h-[18px] border-b border-[#ececec]">
                <td className="border-r border-[#ececec] p-0 pl-[5px]">
                  <div className="flex items-center gap-[2px]">{small[row.icon]}{row.name}</div>
                </td>
                {row.values.map((v, i) => (
                  <td key={i} className="border-r border-[#ececec] p-0 pr-[7px] text-right">{v}</td>
                ))}
              </tr>
            ))}
            <tr className="h-[15px]">
              <td className="border-r border-[#ececec]" />
              <td className="border-r border-[#ececec]" />
              <td />
            </tr>
          </tbody>
        </table>
      </div>
      <table className="mt-[4px] w-full table-fixed border-collapse border-t border-[#828790] bg-white text-left">
        <thead>
          <tr className="h-[25px]">
            {['Domain', 'Left', 'Right', 'Difference', '1/Difference'].map((h) => (
              <th key={h} className="border-r border-[#e5e5e5] pl-[7px] font-normal">{h}</th>
            ))}
          </tr>
        </thead>
        <tbody>
          <tr className="h-[22px]">
            {domain.map((v, i) => (
              <td key={i} className="p-0 pb-[3px] pl-[7px]">{v}</td>
            ))}
          </tr>
        </tbody>
      </table>
    </section>
  )
}

const common = ['decimals', 'clipboard', 'display', 'pin', 'resistor']

const window1 = {
  title: 'Value window of graph 1',
  bars: [
    { groups: [common, ['left', 'right', 'width', 'top', 'bottom', 'topBottom', 'slope']], active: ['display', 'pin', 'topBottom'] },
    {
      groups: [[
        'atX', 'max', 'min', 'maxMin', 'rms', 'mean', 'variance', 'stdDev', 'frequency', 'period', 'dutyPos', 'dutyNeg',
        'widthPos', 'widthNeg', 'count', 'rise', 'fall', 'slew', 'power', 'phase', 'burst', 'pulses',
      ]],
      active: ['maxMin', 'rms', 'frequency'],
    },
  ],
  columns: [{ name: 'Ch1', icon: 'ch1' }, { name: 'Filter2( Ch1 )', icon: 'band' }],
  rows: [
    { name: 'Maximum - Minimum', icon: 'maxMin', values: ['19.305 V', '20.848 V'] },
    { name: 'RMS', icon: 'rms', values: ['6.764 V', '6.763 V'] },
    { name: 'Frequency', icon: 'frequency', values: ['1.000 kHz', '999.983 Hz'] },
    { name: 'Top - Bottom', icon: 'topBottom', values: ['10.275 V', '0.1028 V'] },
  ],
  domain: ['Time', '0 s', '1.0240 s', '1.0240 s', '976.6 mHz'],
}

const window2 = {
  title: 'Value window of graph 2',
  bars: [
    {
      groups: [common, ['left', 'right', 'width', 'top', 'bottom', 'topBottom'], ['atX', 'max', 'min', 'maxMin', 'mean', 'thd']],
      active: ['display', 'pin', 'top', 'mean', 'thd'],
    },
  ],
  columns: [{ name: '20*log10_1( FFT1 )', icon: 'log' }, { name: '20*log10_2( FFT2 )', icon: 'log' }],
  rows: [
    { name: 'Mean', icon: 'mean', values: ['-78.12 dBV', '-82.32 dBV'] },
    { name: 'THD', icon: 'thd', values: ['0.061 %', '0.061 %'] },
    { name: 'Top', icon: 'top', values: ['-dBV', '-dBV'] },
  ],
  domain: ['Frequency', '374 Hz', '8.79 kHz', '8.415 kHz', '-'],
}

export default function App() {
  return (
    <div className="relative flex h-screen flex-col overflow-hidden bg-white font-['Open_Sans','Noto_Sans',sans-serif] text-[11px] leading-[16px] text-black">
      <TitleBar />
      <div className="flex shrink-0">
        <div className="mr-[2px] min-w-0 flex-1">
          <div className="flex h-[25px] items-center gap-[17px] border-b border-[#d0d0d0] pl-[8px]">
            {menus.map((m) => (
              <button key={m} type="button">{m}</button>
            ))}
          </div>
          <MainToolbar />
        </div>
        <Logo />
      </div>
      <InstrumentToolbar />
      <div className="flex h-[42px] shrink-0 border-b border-[#d0d0d0]">
        <div className="flex min-w-0 flex-1 items-center pl-[2px]">
          <ChannelBar name="Ch1" color="#0f0" coupling="AC" range="20 V" canRaise />
        </div>
        <div className="flex w-[320px] shrink-0 items-center overflow-hidden border-l border-[#d0d0d0]">
          <Grip />
          <ChannelBar name="Ch2" color="#0ff" coupling="DC" range="80 V" />
        </div>
      </div>
      <div className="h-[5px] shrink-0 bg-[#f0f0f0] pt-[2px]">
        <div className="h-px bg-[#d8d8d8]" />
      </div>
      <main className="flex min-h-0 flex-1">
        <ObjectTree />
        <div className="flex w-[11px] shrink-0 flex-col items-center border-r border-[#a0a0a0] bg-[#f0f0f0] pt-[3px]">
          <svg width="5" height="6"><path d="M5 0v6L0 3z" fill="#000" /></svg>
          <div className="mt-[2px] w-[4px] flex-1 bg-[#a0a0a0]" />
        </div>
        <div className="w-[6px] shrink-0 bg-[#f0f0f0]" />
        <TimeGraph />
        <FrequencyGraph />
      </main>
      <ValueWindow {...window1} className="top-[15px] left-[641px]" />
      <ValueWindow {...window2} className="top-[378px] left-[485px]" />
    </div>
  )
}
